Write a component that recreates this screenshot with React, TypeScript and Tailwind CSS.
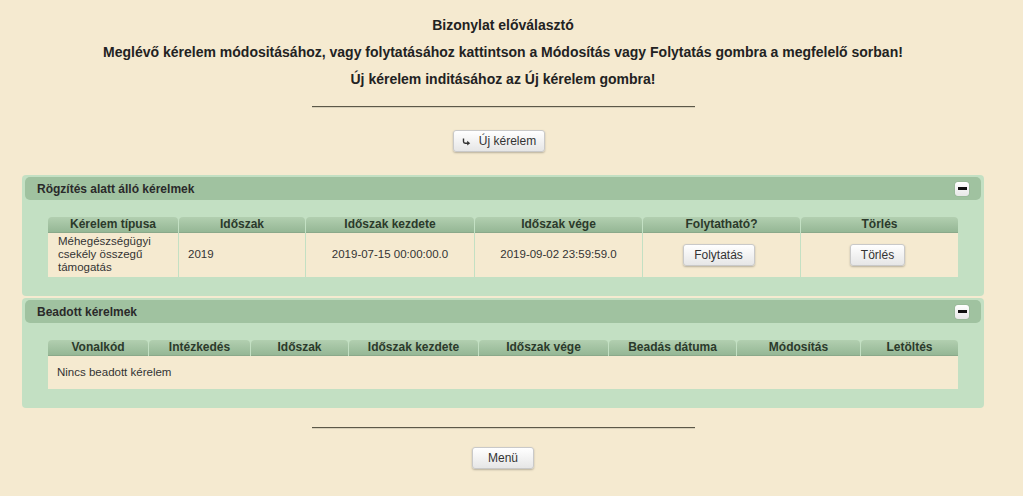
import React from "react";

const font = { fontFamily: '"Liberation Sans", Arial, sans-serif' };

function Btn({ children, className = "" }: { children: React.ReactNode; className?: string }) {
  return (
    <button
      className={
        "h-[22px] rounded-[3px] border border-[#c9c9c9] bg-gradient-to-b from-[#ffffff] to-[#e6e6e6] text-[12px] text-[#333] shadow-[0_1px_2px_rgba(0,0,0,0.25)] flex items-center justify-center " +
        className
      }
    >
      {children}
    </button>
  );
}

function Hr() {
  return <div className="w-[383px] h-[2px] border-t border-[#5c5848] border-b border-b-[#d8d0b8] mx-auto" />;
}

function Minus() {
  return (
    <div className="w-[14px] h-[14px] rounded-[3px] bg-gradient-to-b from-[#ffffff] to-[#e8e8e8] shadow-[0_0_1px_rgba(0,0,0,0.4)] flex items-center justify-center">
      <div className="w-[9px] h-[3px] bg-[#111]" />
    </div>
  );
}

function HeadCell({ children }: { children: React.ReactNode }) {
  return (
    <div className="h-[16px] rounded-t-[4px] bg-gradient-to-b from-[#b2cfb0] to-[#95b795] border-b border-[#8aa98a] text-[12px] font-bold leading-[15px] text-[#2b3a2b] text-center truncate">
      {children}
    </div>
  );
}

function Panel({ title, children }: { title: string; children: React.ReactNode }) {
  return (
    <div className="mx-[22px] rounded-[4px] bg-[#c3e0c3] px-[3px] pt-[2px] pb-[19px]">
      <div className="h-[23px] rounded-[5px] bg-[#a0c2a0] flex items-center justify-between pl-[12px] pr-[12px]">
        <span className="text-[12px] font-bold text-[#2a2a2a]">{title}</span>
        <Minus />
      </div>
      <div className="mt-[17px] ml-[23px] mr-[22px]">{children}</div>
    </div>
  );
}

export default function App() {
  return (
    <div className="min-h-[496px] w-full bg-[#f5ead0]" style={font}>
      <div className="w-[1006px] pt-[12px] pb-[27px]">
        <div className="text-center text-[14px] font-bold leading-[27px] text-[#222]">
          <div>Bizonylat előválasztó</div>
          <div>Meglévő kérelem módositásához, vagy folytatásához kattintson a Módosítás vagy Folytatás gombra a megfelelő sorban!</div>
          <div>Új kérelem inditásához az Új kérelem gombra!</div>
        </div>
        <div className="mt-[13px]">
          <Hr />
        </div>
        <div className="mt-[22px] flex justify-center">
          <Btn className="w-[92px] gap-[8px] ml-[-8px]">
            <svg width="9" height="8" viewBox="0 0 9 8" className="mt-[1px]">
              <path d="M1.5 0.5 V3.5 Q1.5 5.2 3.2 5.2 H6" stroke="#333" strokeWidth="1.4" fill="none" />
              <path d="M5.2 2.8 L8.2 5.2 L5.2 7.6 Z" fill="#333" />
            </svg>
            <span>Új kérelem</span>
          </Btn>
        </div>

        <div className="mt-[23px]">
          <Panel title="Rögzítés alatt álló kérelmek">
            <div className="grid grid-cols-[130px_126px_168px_167px_157px_157px] gap-x-px">
              <HeadCell>Kérelem típusa</HeadCell>
              <HeadCell>Időszak</HeadCell>
              <HeadCell>Időszak kezdete</HeadCell>
              <HeadCell>Időszak vége</HeadCell>
              <HeadCell>Folytatható?</HeadCell>
              <HeadCell>Törlés</HeadCell>
              <div className="h-[44px] bg-[#f5ead0] pl-[10px] pt-[2px] text-[11.5px] leading-[13px] text-[#333]">
                Méhegészségügyi
                <br />
                csekély összegű
                <br />
                támogatás
              </div>
              <div className="h-[44px] bg-[#f5ead0] pl-[9px] flex items-center text-[11.5px] text-[#333]">2019</div>
              <div className="h-[44px] bg-[#f5ead0] flex items-center justify-center text-[11.5px] text-[#333]">
                2019-07-15 00:00:00.0
              </div>
              <div className="h-[44px] bg-[#f5ead0] flex items-center justify-center text-[11.5px] text-[#333]">
                2019-09-02 23:59:59.0
              </div>
              <div className="h-[44px] bg-[#f5ead0] flex items-center justify-center">
                <Btn className="w-[72px] ml-[-6px]">Folytatás</Btn>
              </div>
              <div className="h-[44px] bg-[#f5ead0] flex items-center justify-center">
                <Btn className="w-[55px] ml-[-4px]">Törlés</Btn>
              </div>
            </div>
          </Panel>
        </div>

        <div className="mt-[2px]">
          <Panel title="Beadott kérelmek">
            <div className="grid grid-cols-[100px_101px_97px_129px_129px_127px_123px_97px] gap-x-px">
              <HeadCell>Vonalkód</HeadCell>
              <HeadCell>Intézkedés</HeadCell>
              <HeadCell>Időszak</HeadCell>
              <HeadCell>Időszak kezdete</HeadCell>
              <HeadCell>Időszak vége</HeadCell>
              <HeadCell>Beadás dátuma</HeadCell>
              <HeadCell>Módosítás</HeadCell>
              <HeadCell>Letöltés</HeadCell>
              <div className="col-span-8 h-[33px] bg-[#f5ead0] pl-[9px] flex items-center text-[11.5px] text-[#333]">
                Nincs beadott kérelem
              </div>
            </div>
          </Panel>
        </div>

        <div className="mt-[19px]">
          <Hr />
        </div>
        <div className="mt-[18px] flex justify-center">
          <Btn className="w-[62px]">Menü</Btn>
        </div>
      </div>
    </div>
  );
}
